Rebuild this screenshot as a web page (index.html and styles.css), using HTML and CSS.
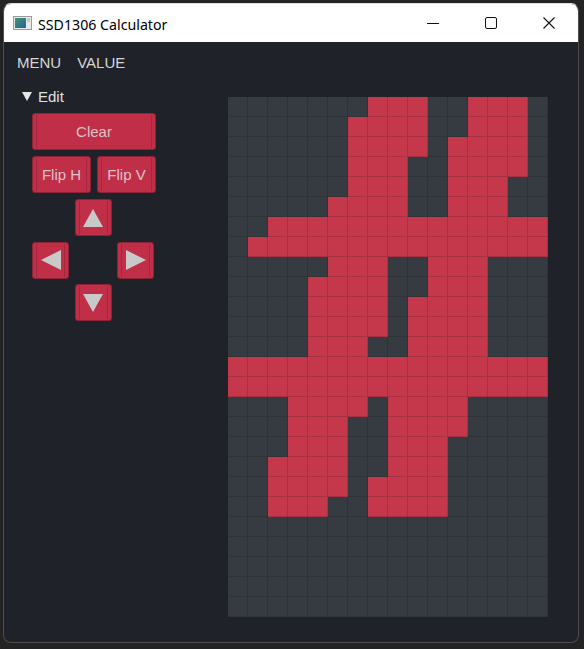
FILE: index.html
```html
<!DOCTYPE html>
<html>
<head>
<meta charset="utf-8">
<title>SSD1306 Calculator</title>
<link rel="stylesheet" href="styles.css">
</head>
<body>
<div class="window">
  <div class="titlebar">
    <svg class="appicon" width="19" height="14" viewBox="0 0 19 14">
      <defs>
        <linearGradient id="g" x1="0" y1="0" x2="1" y2="1">
          <stop offset="0" stop-color="#3f9a6e"/>
          <stop offset="1" stop-color="#2d5f9e"/>
        </linearGradient>
      </defs>
      <rect x="0.5" y="0.5" width="18" height="13" fill="#e9e9e9" stroke="#9a9a9a"/>
      <rect x="2" y="2" width="11" height="10" fill="url(#g)"/>
      <rect x="14" y="2" width="3" height="4" fill="#c8c8c8"/>
    </svg>
    <span class="title">SSD1306 Calculator</span>
    <div class="controls">
      <div class="ctl"><svg width="12" height="12" viewBox="0 0 12 12"><path d="M0 6.5H12" stroke="#111" stroke-width="1"/></svg></div>
      <div class="ctl"><svg width="12" height="12" viewBox="0 0 12 12"><rect x="0.5" y="0.5" width="11" height="11" rx="1.5" fill="none" stroke="#111" stroke-width="1"/></svg></div>
      <div class="ctl"><svg width="12" height="12" viewBox="0 0 12 12"><path d="M0.5 0.5L11.5 11.5M11.5 0.5L0.5 11.5" stroke="#111" stroke-width="1.1"/></svg></div>
    </div>
  </div>
  <div class="content">
    <div class="menubar">
      <span class="menu">MENU</span>
      <span class="menu">VALUE</span>
    </div>
    <div class="main">
      <div class="sidebar">
        <div class="section">
          <svg class="caret" width="10" height="9" viewBox="0 0 10 9"><polygon points="0,0 10,0 5,9" fill="#e6e6e6"/></svg>
          <span>Edit</span>
        </div>
        <div class="buttons">
          <div class="btn wide">Clear</div>
          <div class="pair">
            <div class="btn half">Flip H</div>
            <div class="btn half">Flip V</div>
          </div>
          <div class="arrows">
            <div class="btn sq up"><svg width="20" height="18" viewBox="0 0 20 18"><polygon points="10,0 20,18 0,18" fill="#c9c9c9"/></svg></div>
            <div class="btn sq left"><svg width="20" height="20" viewBox="0 0 20 20"><polygon points="0,10 20,0 20,20" fill="#c9c9c9"/></svg></div>
            <div class="btn sq right"><svg width="20" height="20" viewBox="0 0 20 20"><polygon points="20,10 0,0 0,20" fill="#c9c9c9"/></svg></div>
            <div class="btn sq down"><svg width="20" height="18" viewBox="0 0 20 18"><polygon points="0,0 20,0 10,18" fill="#c9c9c9"/></svg></div>
          </div>
        </div>
      </div>
      <div class="canvas">
        <i></i><i></i><i></i><i></i><i></i><i></i><i></i><i class="on"></i><i class="on"></i><i class="on"></i><i></i><i></i><i class="on"></i><i class="on"></i><i class="on"></i><i></i>
        <i></i><i></i><i></i><i></i><i></i><i></i><i class="on"></i><i class="on"></i><i class="on"></i><i class="on"></i><i></i><i></i><i class="on"></i><i class="on"></i><i class="on"></i><i></i>
        <i></i><i></i><i></i><i></i><i></i><i></i><i class="on"></i><i class="on"></i><i class="on"></i><i class="on"></i><i></i><i class="on"></i><i class="on"></i><i class="on"></i><i class="on"></i><i></i>
        <i></i><i></i><i></i><i></i><i></i><i></i><i class="on"></i><i class="on"></i><i class="on"></i><i></i><i></i><i class="on"></i><i class="on"></i><i class="on"></i><i class="on"></i><i></i>
        <i></i><i></i><i></i><i></i><i></i><i></i><i class="on"></i><i class="on"></i><i class="on"></i><i></i><i></i><i class="on"></i><i class="on"></i><i class="on"></i><i></i><i></i>
        <i></i><i></i><i></i><i></i><i></i><i class="on"></i><i class="on"></i><i class="on"></i><i class="on"></i><i></i><i></i><i class="on"></i><i class="on"></i><i class="on"></i><i></i><i></i>
        <i></i><i></i><i class="on"></i><i class="on"></i><i class="on"></i><i class="on"></i><i class="on"></i><i class="on"></i><i class="on"></i><i class="on"></i><i class="on"></i><i class="on"></i><i class="on"></i><i class="on"></i><i class="on"></i><i class="on"></i>
        <i></i><i class="on"></i><i class="on"></i><i class="on"></i><i class="on"></i><i class="on"></i><i class="on"></i><i class="on"></i><i class="on"></i><i class="on"></i><i class="on"></i><i class="on"></i><i class="on"></i><i class="on"></i><i class="on"></i><i class="on"></i>
        <i></i><i></i><i></i><i></i><i></i><i class="on"></i><i class="on"></i><i class="on"></i><i></i><i></i><i class="on"></i><i class="on"></i><i class="on"></i><i></i><i></i><i></i>
        <i></i><i></i><i></i><i></i><i class="on"></i><i class="on"></i><i class="on"></i><i class="on"></i><i></i><i></i><i class="on"></i><i class="on"></i><i class="on"></i><i></i><i></i><i></i>
        <i></i><i></i><i></i><i></i><i class="on"></i><i class="on"></i><i class="on"></i><i class="on"></i><i></i><i class="on"></i><i class="on"></i><i class="on"></i><i class="on"></i><i></i><i></i><i></i>
        <i></i><i></i><i></i><i></i><i class="on"></i><i class="on"></i><i class="on"></i><i class="on"></i><i></i><i class="on"></i><i class="on"></i><i class="on"></i><i class="on"></i><i></i><i></i><i></i>
        <i></i><i></i><i></i><i></i><i class="on"></i><i class="on"></i><i class="on"></i><i></i><i></i><i class="on"></i><i class="on"></i><i class="on"></i><i class="on"></i><i></i><i></i><i></i>
        <i class="on"></i><i class="on"></i><i class="on"></i><i class="on"></i><i class="on"></i><i class="on"></i><i class="on"></i><i class="on"></i><i class="on"></i><i class="on"></i><i class="on"></i><i class="on"></i><i class="on"></i><i class="on"></i><i class="on"></i><i class="on"></i>
        <i class="on"></i><i class="on"></i><i class="on"></i><i class="on"></i><i class="on"></i><i class="on"></i><i class="on"></i><i class="on"></i><i class="on"></i><i class="on"></i><i class="on"></i><i class="on"></i><i class="on"></i><i class="on"></i><i class="on"></i><i class="on"></i>
        <i></i><i></i><i></i><i class="on"></i><i class="on"></i><i class="on"></i><i class="on"></i><i></i><i class="on"></i><i class="on"></i><i class="on"></i><i class="on"></i><i></i><i></i><i></i><i></i>
        <i></i><i></i><i></i><i class="on"></i><i class="on"></i><i class="on"></i><i></i><i></i><i class="on"></i><i class="on"></i><i class="on"></i><i class="on"></i><i></i><i></i><i></i><i></i>
        <i></i><i></i><i></i><i class="on"></i><i class="on"></i><i class="on"></i><i></i><i></i><i class="on"></i><i class="on"></i><i class="on"></i><i></i><i></i><i></i><i></i><i></i>
        <i></i><i></i><i class="on"></i><i class="on"></i><i class="on"></i><i class="on"></i><i></i><i></i><i class="on"></i><i class="on"></i><i class="on"></i><i></i><i></i><i></i><i></i><i></i>
        <i></i><i></i><i class="on"></i><i class="on"></i><i class="on"></i><i class="on"></i><i></i><i class="on"></i><i class="on"></i><i class="on"></i><i class="on"></i><i></i><i></i><i></i><i></i><i></i>
        <i></i><i></i><i class="on"></i><i class="on"></i><i class="on"></i><i></i><i></i><i class="on"></i><i class="on"></i><i class="on"></i><i class="on"></i><i></i><i></i><i></i><i></i><i></i>
        <i></i><i></i><i></i><i></i><i></i><i></i><i></i><i></i><i></i><i></i><i></i><i></i><i></i><i></i><i></i><i></i>
        <i></i><i></i><i></i><i></i><i></i><i></i><i></i><i></i><i></i><i></i><i></i><i></i><i></i><i></i><i></i><i></i>
        <i></i><i></i><i></i><i></i><i></i><i></i><i></i><i></i><i></i><i></i><i></i><i></i><i></i><i></i><i></i><i></i>
        <i></i><i></i><i></i><i></i><i></i><i></i><i></i><i></i><i></i><i></i><i></i><i></i><i></i><i></i><i></i><i></i>
        <i></i><i></i><i></i><i></i><i></i><i></i><i></i><i></i><i></i><i></i><i></i><i></i><i></i><i></i><i></i><i></i>
      </div>
    </div>
  </div>
</div>
</body>
</html>
```

FILE: styles.css
```css
* { box-sizing: border-box; margin: 0; padding: 0; }
html, body { height: 100%; }
body {
  background: #232323;
  padding: 3px 0 0 3px;
  font-family: "Liberation Sans", Arial, sans-serif;
  overflow: hidden;
}
.window {
  width: 576px;
  height: 640px;
  border: 1px solid #4d4d4d;
  border-top-color: #e0e0e0;
  border-radius: 8px;
  overflow: hidden;
  display: flex;
  flex-direction: column;
  background: #1f2229;
}
.titlebar {
  height: 38px;
  flex-shrink: 0;
  background: #ffffff;
  display: flex;
  align-items: center;
}
.appicon { margin-left: 9px; }
.title {
  margin-left: 6px;
  font-family: "Noto Sans", "Open Sans", sans-serif;
  font-size: 14.2px;
  color: #000;
  position: relative;
  top: 1px;
}
.controls { margin-left: auto; display: flex; height: 100%; }
.ctl {
  width: 58px;
  height: 100%;
  display: flex;
  align-items: center;
  justify-content: center;
}
.content { flex: 1; display: flex; flex-direction: column; }
.menubar {
  display: flex;
  gap: 16px;
  padding: 12px 0 0 13px;
  line-height: 17px;
  font-size: 15px;
  color: #d6d6d6;
}
.main {
  display: flex;
  padding: 17px 0 0 18px;
}
.sidebar { width: 138px; display: flex; flex-direction: column; }
.section {
  display: flex;
  align-items: center;
  gap: 6px;
  height: 17px;
  font-size: 15px;
  color: #e0e0e0;
}
.buttons {
  margin: 8px 0 0 10px;
  display: flex;
  flex-direction: column;
  gap: 6px;
}
.btn {
  position: relative;
  height: 37px;
  background: #c02e48;
  border: 1px solid #8e2236;
  border-radius: 3px;
  color: #dcc2c7;
  font-size: 15px;
  display: flex;
  align-items: center;
  justify-content: center;
}
.btn::before {
  content: "";
  position: absolute;
  top: 1px; bottom: 1px; left: 3px; right: 3px;
  border-left: 1px solid #a2283d;
  border-right: 1px solid #a2283d;
}
.wide { width: 124px; }
.pair { display: flex; gap: 6px; }
.half { width: 59px; }
.arrows {
  display: grid;
  grid-template-columns: 37px 37px 37px;
  grid-auto-rows: 37px;
  column-gap: 5.5px;
  row-gap: 5.5px;
}
.sq { width: 37px; }
.up { grid-column: 2; grid-row: 1; }
.left { grid-column: 1; grid-row: 2; }
.right { grid-column: 3; grid-row: 2; }
.down { grid-column: 2; grid-row: 3; }
.btn svg { position: relative; }
.canvas {
  margin: 9px 0 0 68px;
  display: grid;
  grid-template-columns: repeat(16, 20px);
  grid-auto-rows: 20px;
  width: 320px;
  height: 520px;
}
.canvas i {
  display: block;
  background: #353b41;
  box-shadow: inset -1px -1px 0 #2e3338;
}
.canvas i.on {
  background: #c5374b;
  box-shadow: inset -1px -1px 0 #a93043;
}
```
